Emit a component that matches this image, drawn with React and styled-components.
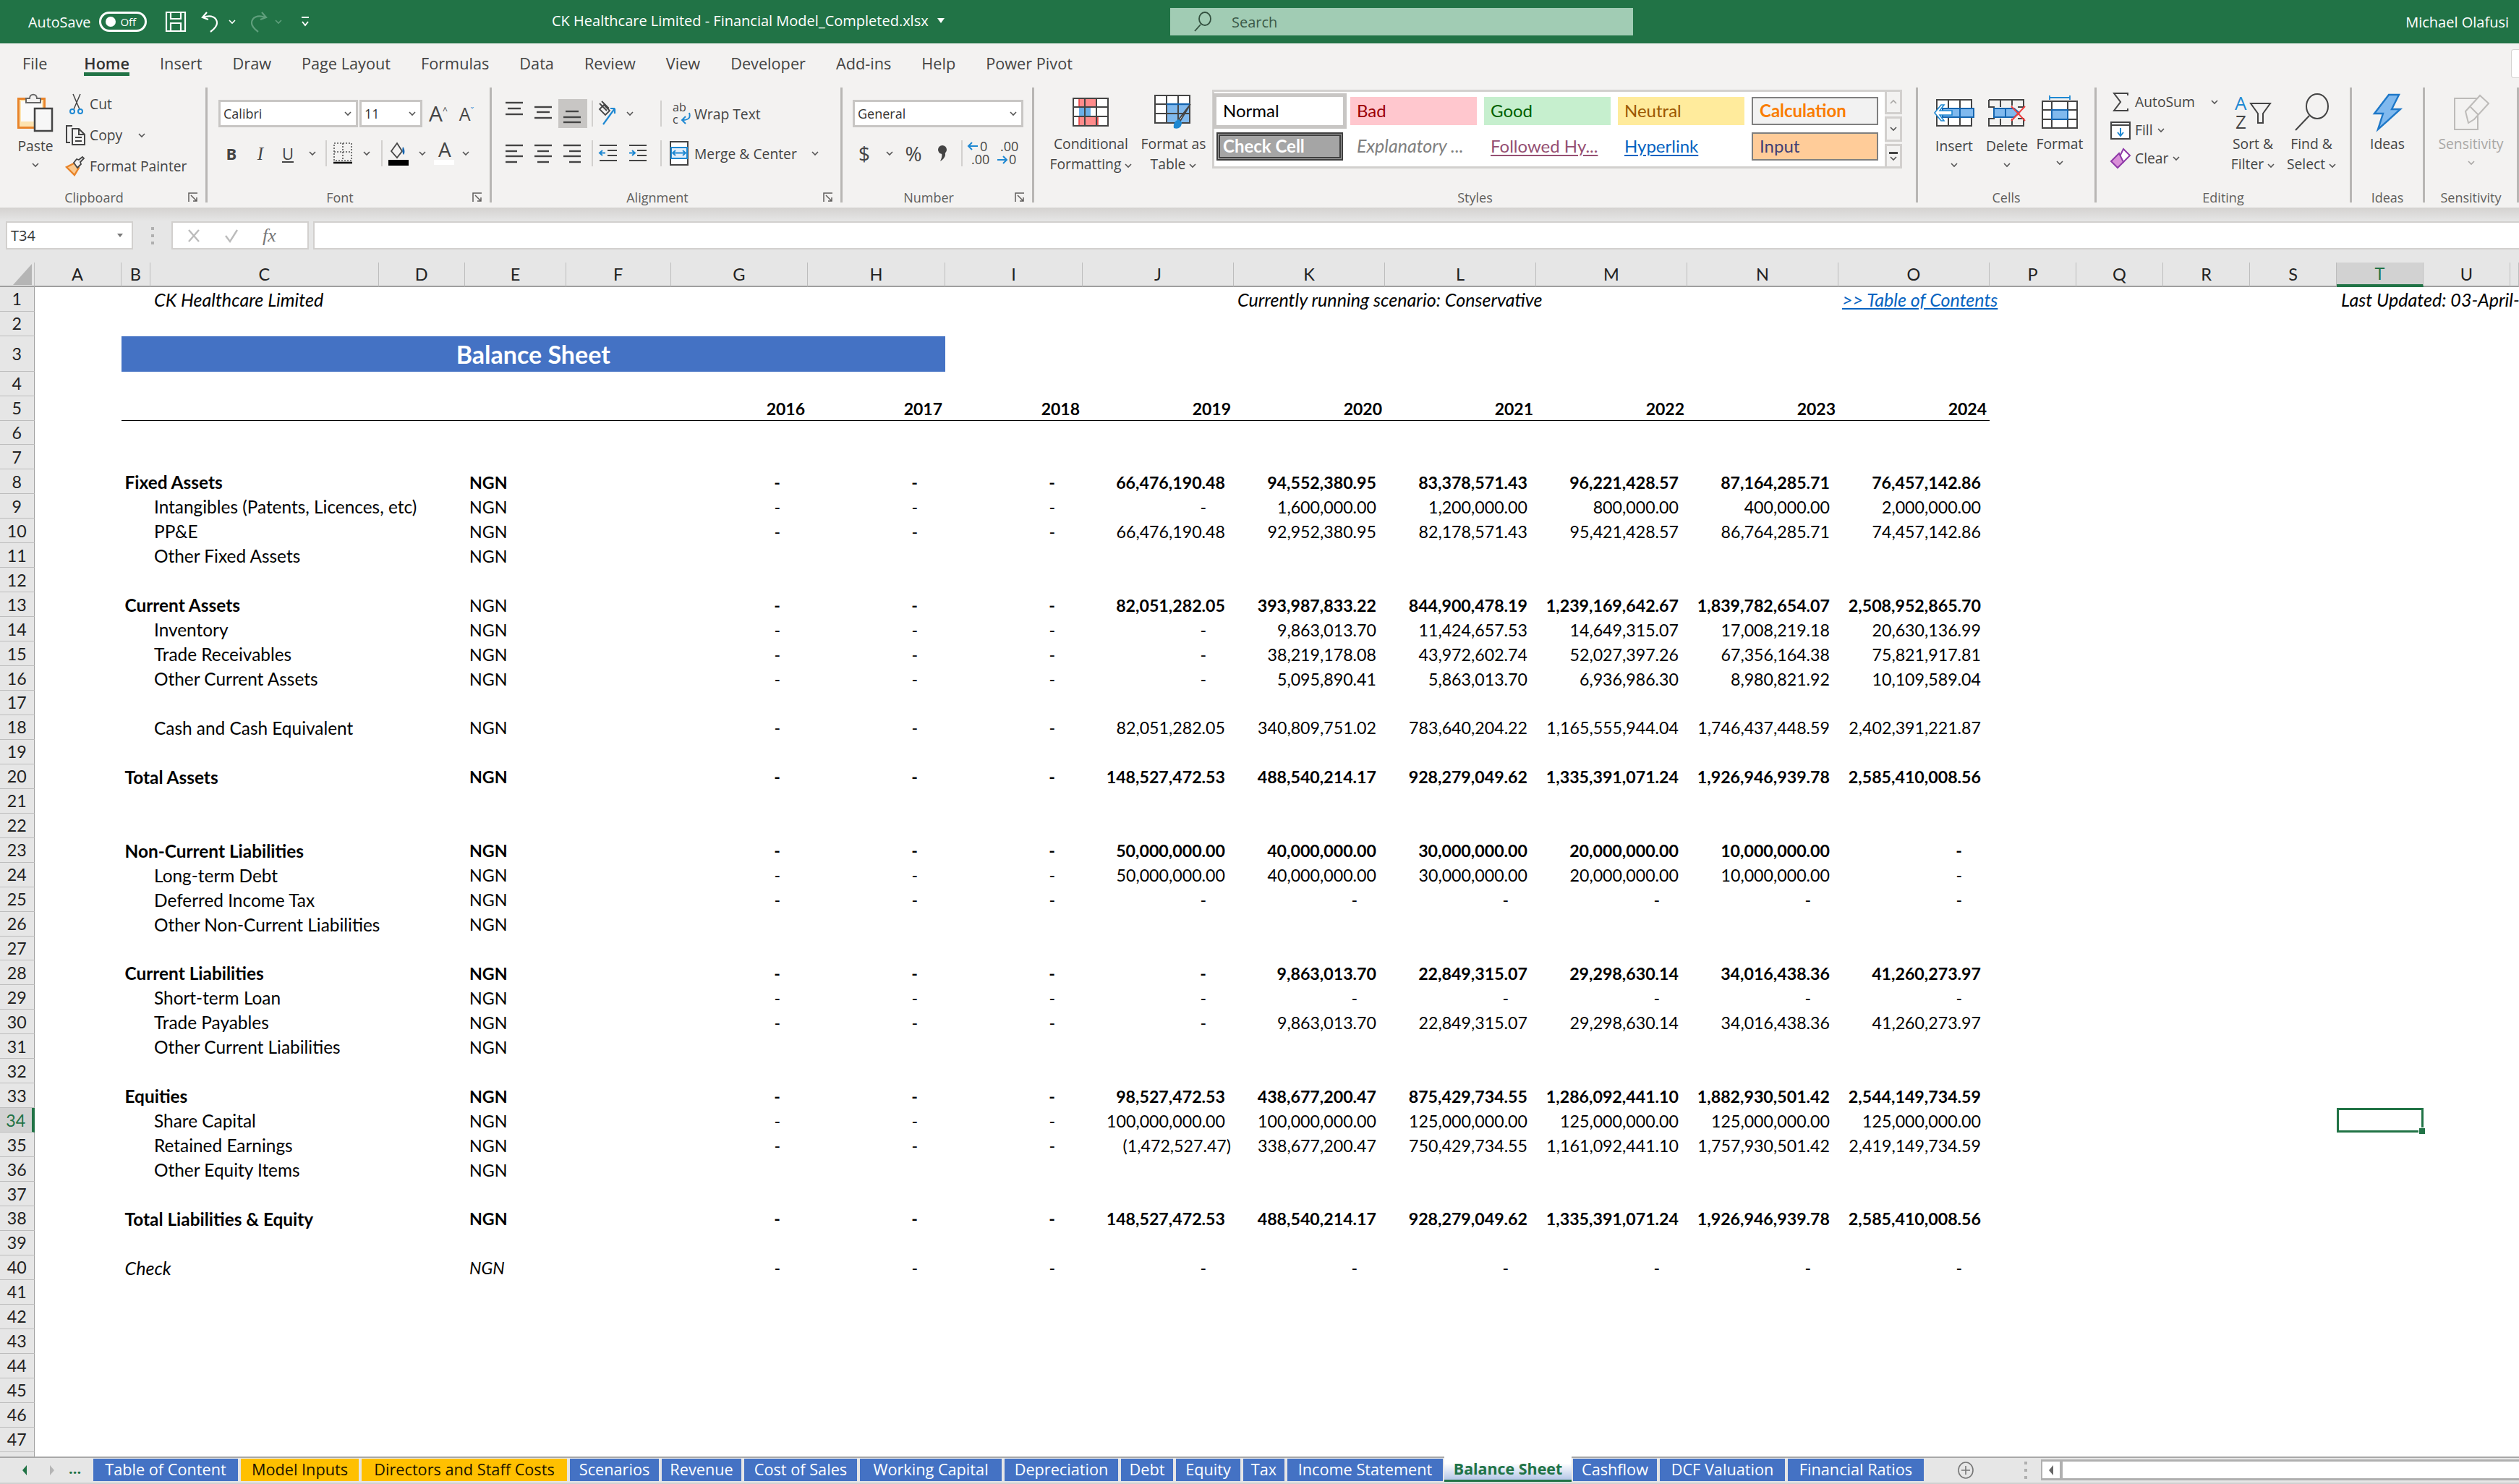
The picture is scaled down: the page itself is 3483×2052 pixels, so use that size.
import React from 'react';
import styled, { createGlobalStyle, css } from 'styled-components';

const UI = `"Open Sans", "Noto Sans", sans-serif`;
const SHEET = `Lato, "Liberation Sans", sans-serif`;
const GREEN = '#217346';
const COLS = '47.5px 120px 40.5px 315.5px 119.5px 140px 144.5px 189.5px 190px 190px 209px 209px 209px 209px 209px 209px 120px 120px 120px 120px 120px 120px 12px';

const Global = createGlobalStyle`
  html, body { margin: 0; padding: 0; background: #fff; }
  * { box-sizing: border-box; }
`;

const Page = styled.div`
  width: 3483px;
  height: 2052px;
  display: flex;
  flex-direction: column;
  overflow: hidden;
  font-family: ${UI};
  background: #fff;
`;

/* title bar */
const TitleBar = styled.header`
  height: 60px;
  flex: none;
  background: ${GREEN};
  color: #fff;
  display: flex;
  align-items: center;
  font-size: 20px;
`;
const Quick = styled.div`
  width: 763px;
  padding-left: 39px;
  display: flex;
  align-items: center;
  font-size: 19.8px;
`;
const Toggle = styled.div`
  width: 66px;
  height: 28px;
  margin: 0 26px 0 12px;
  border: 3px solid #fff;
  border-radius: 14px;
  display: flex;
  align-items: center;
  padding-left: 6px;
  gap: 6px;
  font-size: 15px;
  &::before { content: ''; width: 14px; height: 14px; border-radius: 50%; background: #fff; }
`;
const QuickBtn = styled.span`
  display: flex;
  justify-content: center;
  align-items: center;
  width: ${p => p.$w}px;
  margin-left: ${p => p.$m || 0}px;
`;
const DocTitle = styled.div`
  width: 855px;
  display: flex;
  align-items: center;
  gap: 12px;
  margin-top: -4px;
`;
const Caret = styled.span`
  width: 0;
  height: 0;
  border-left: 5px solid transparent;
  border-right: 5px solid transparent;
  border-top: 7px solid #fff;
`;
const SearchBox = styled.div`
  width: 640px;
  height: 38px;
  background: #a1ccb4;
  color: #3b5a48;
  display: flex;
  align-items: center;
  padding-left: 33px;
  gap: 28px;
`;
const UserName = styled.div`
  flex: 1;
  text-align: right;
  padding-right: 14px;
`;

/* tabs */
const TabStrip = styled.nav`
  height: 61px;
  flex: none;
  background: #f3f2f1;
  display: flex;
  align-items: center;
  padding: 0 0 6px 31px;
  gap: 42px;
  font-size: 21.7px;
  color: #444;
`;
const MenuTab = styled.span`
  position: relative;
  margin-right: ${p => p.$gap || 0}px;
  ${p => p.$on && css`
    font-weight: 600;
    color: #333;
    &::after {
      content: '';
      position: absolute;
      left: 0;
      right: 0;
      bottom: -3px;
      height: 5px;
      background: ${GREEN};
    }
  `}
`;
const ShareStub = styled.span`
  margin-left: auto;
  width: 11px;
  height: 40px;
  background: #fff;
  border: 1px solid #d5d3d1;
  border-right: 0;
  border-radius: 4px 0 0 4px;
`;

/* ribbon */
const Ribbon = styled.section`
  height: 166px;
  flex: none;
  background: #f3f2f1;
  display: flex;
  align-items: flex-start;
  color: #444;
  font-size: 19.3px;
`;
const Group = styled.div`
  width: ${p => p.$w}px;
  height: 159px;
  flex: none;
  border-right: 3px solid #b8b6b4;
  display: flex;
  flex-direction: column;
`;
const GroupBody = styled.div`
  height: 144px;
  display: flex;
  padding-left: ${p => p.$left || 0}px;
`;
const GroupFoot = styled.div`
  height: 15px;
  display: flex;
  align-items: center;
  font-size: 18px;
  color: #605e5c;
`;
const FootLabel = styled.span`
  flex: 1;
  text-align: center;
`;
const Launcher = styled.span`
  width: 24px;
  display: flex;
`;
const BigBtn = styled.div`
  width: ${p => p.$w}px;
  padding-top: 3px;
  display: flex;
  flex-direction: column;
  align-items: center;
  line-height: 28px;
  white-space: nowrap;
  color: ${p => p.$off ? '#a9a7a5' : 'inherit'};
`;
const IconSlot = styled.div`
  height: ${p => p.$h || 61}px;
  display: flex;
  align-items: center;
  justify-content: center;
`;
const ChevLine = styled.div`
  height: 24px;
  display: flex;
  align-items: center;
`;
const InlineChev = styled.span`
  display: inline-flex;
  margin-left: 5px;
  vertical-align: middle;
`;
const Stack = styled.div`
  width: ${p => p.$w}px;
  flex: none;
  display: flex;
  flex-direction: column;
  margin-left: ${p => p.$m || 0}px;
  padding-top: ${p => p.$top || 0}px;
`;
const SmallCmd = styled.div`
  height: ${p => p.$h}px;
  display: flex;
  align-items: center;
  white-space: nowrap;
`;
const CmdIcon = styled.span`
  width: ${p => p.$w}px;
  flex: none;
  display: flex;
  padding-left: ${p => p.$pl || 0}px;
`;
const CmdChev = styled.span`
  display: flex;
  margin-left: ${p => p.$m}px;
`;
const Rows = styled.div`
  display: flex;
  flex-direction: column;
  padding-top: 17px;
  gap: 17px;
`;
const Row = styled.div`
  height: 38px;
  display: flex;
  align-items: center;
`;
const Slot = styled.span`
  width: ${p => p.$w}px;
  flex: none;
  height: 40px;
  display: flex;
  align-items: center;
  justify-content: center;
  background: ${p => p.$on ? '#c8c6c4' : 'transparent'};
`;
const Sep = styled.span`
  width: 2px;
  height: 36px;
  flex: none;
  background: #d2d0ce;
  margin-left: ${p => p.$m || 0}px;
`;
const Combo = styled.div`
  width: ${p => p.$w}px;
  height: 38px;
  flex: none;
  margin-right: ${p => p.$gap || 0}px;
  background: #fff;
  border: 3px solid #c8c6c4;
  display: flex;
  align-items: center;
  justify-content: space-between;
  padding: 0 6px 0 4px;
  color: #333;
  font-size: 18px;
`;
const Glyph = styled.span`
  font-family: ${p => p.$serif ? '"Liberation Serif", serif' : UI};
  font-weight: ${p => p.$bold ? 700 : 400};
  font-style: ${p => p.$italic ? 'italic' : 'normal'};
  text-decoration: ${p => p.$under ? 'underline' : 'none'};
  font-size: ${p => p.$size || 22}px;
  margin-top: ${p => p.$top || 0}px;
  color: #444;
  line-height: 1;
`;
const GlyphMark = styled.sup`
  font-size: 12px;
  color: ${p => p.$c || '#444'};
`;

/* styles gallery */
const Gallery = styled.div`
  width: 930px;
  height: 109px;
  margin-top: 3px;
  flex: none;
  background: #fff;
  border: solid #d2d0ce;
  border-width: 3px 0 3px 3px;
  padding: 7px 0 0 3px;
  display: grid;
  grid-template-columns: repeat(5, 175px);
  grid-auto-rows: 39px;
  gap: 10px;
`;
const styleKinds = {
  normal: css`color: #000; box-shadow: 0 0 0 5px #c8c6c4;`,
  bad: css`background: #ffc7ce; color: #9c0006;`,
  good: css`background: #c6efce; color: #006100;`,
  neutral: css`background: #ffeb9c; color: #9c5700;`,
  calc: css`background: #f2f2f2; color: #fa7d00; font-weight: 700; border: 2px solid #7f7f7f;`,
  check: css`background: #a5a5a5; color: #fff; font-weight: 700; border: 5px double #3f3f3f; padding-left: 4px;`,
  explan: css`color: #7f7f7f; font-style: italic; font-size: 25px;`,
  followed: css`color: #954f72; & > span { text-decoration: underline 2px; text-underline-offset: 3px; }`,
  link: css`color: #0563c1; & > span { text-decoration: underline 2px; text-underline-offset: 3px; }`,
  input: css`background: #ffcc99; color: #3f3f76; border: 2px solid #7f7f7f;`,
};
const StyleCell = styled.div`
  font-family: ${SHEET};
  font-size: 24px;
  display: flex;
  align-items: center;
  padding: 0 0 3px 9px;
  ${p => styleKinds[p.$kind]}
`;
const ScrollCol = styled.div`
  width: 24px;
  height: 109px;
  margin: 3px 19px 0 0;
  flex: none;
  display: flex;
  flex-direction: column;
  gap: 3px;
`;
const ScrollBtn = styled.div`
  flex: 1;
  border: 3px solid #d2d0ce;
  background: #f3f2f1;
  display: flex;
  flex-direction: column;
  gap: 3px;
  align-items: center;
  justify-content: center;
`;
const MoreBar = styled.span`
  width: 12px;
  height: 3px;
  background: #444;
`;

/* formula bar */
const FormulaArea = styled.div`
  height: 76px;
  flex: none;
  background: linear-gradient(#d4d2d0, #e6e6e6 19px);
  padding: 19px 0 18px 8px;
  display: flex;
`;
const NameBox = styled.div`
  width: 176px;
  background: #fff;
  border: 2px solid #d2d0ce;
  display: flex;
  align-items: center;
  justify-content: space-between;
  padding: 0 12px 0 5px;
  font-size: 20px;
  color: #333;
`;
const GripArea = styled.div`
  width: 53px;
  display: flex;
  align-items: center;
  justify-content: center;
`;
const Grip = styled.span`
  width: 4px;
  height: 24px;
  background: repeating-linear-gradient(#b0b0b0 0 4px, transparent 4px 10px);
`;
const FxBox = styled.div`
  width: 190px;
  margin-right: 6px;
  background: #fff;
  border: 2px solid #d2d0ce;
  display: flex;
  align-items: center;
  padding-left: 20px;
  gap: 33px;
`;
const FxMark = styled.span`
  font-family: "Liberation Serif", serif;
  font-style: italic;
  font-size: 26px;
  color: #777;
`;
const FormulaInput = styled.div`
  flex: 1;
  background: #fff;
  border: solid #d2d0ce;
  border-width: 2px 0 2px 2px;
`;

/* sheet */
const SheetArea = styled.div`
  flex: 1;
  min-height: 0;
  overflow: hidden;
  font-family: ${SHEET};
  font-size: 23.2px;
  color: #000;
`;
const HeaderRow = styled.div`
  height: 34px;
  display: grid;
  grid-template-columns: ${COLS};
  background: #e6e6e6;
  font-family: ${SHEET};
  font-size: 23.5px;
  color: #222;
`;
const Corner = styled.div`
  border-bottom: 2px solid #9f9f9f;
  border-right: 1px solid #bdbdbd;
  display: flex;
  align-items: flex-end;
  justify-content: flex-end;
  padding: 0 3px 1px 0;
  &::after {
    content: '';
    width: 0;
    height: 0;
    border-left: 26px solid transparent;
    border-bottom: 29px solid #b5b5b5;
  }
`;
const ColHead = styled.div`
  display: flex;
  align-items: center;
  justify-content: center;
  border-right: 1px solid #bdbdbd;
  border-bottom: 2px solid #9f9f9f;
  ${p => p.$on && css`
    background: #d2d2d2;
    color: ${GREEN};
    border-bottom: 4px solid ${GREEN};
  `}
`;
const SheetRow = styled.div`
  height: ${p => p.$h}px;
  display: grid;
  grid-template-columns: ${COLS};
  grid-template-rows: 1fr;
`;
const RowHead = styled.div`
  grid-column: 1;
  grid-row: 1;
  background: #e6e6e6;
  border-right: 1px solid #9f9f9f;
  border-bottom: 1px solid #bdbdbd;
  color: #222;
  display: flex;
  align-items: center;
  justify-content: center;
  ${p => p.$on && css`
    background: #d2d2d2;
    color: ${GREEN};
    border-right: 4px solid ${GREEN};
  `}
`;
const Rule = styled.div`
  grid-column: 3 / 17;
  grid-row: 1;
  border-bottom: 1px solid #000;
`;
const Banner = styled.div`
  grid-column: 3 / 10;
  grid-row: 1;
  background: #4472c4;
  color: #fff;
  font-weight: 700;
  font-size: 34px;
  display: flex;
  align-items: center;
  justify-content: center;
`;
const Cell = styled.div`
  grid-column: ${p => p.$col};
  grid-row: 1;
  white-space: nowrap;
  display: flex;
  align-items: center;
  justify-content: ${p => p.$right ? 'flex-end' : 'flex-start'};
  padding: ${p => p.$right ? `1px ${p.$pad}px 0 0` : `1px 0 0 ${p.$pad}px`};
  font-size: ${p => p.$size || 23.2}px;
  font-weight: ${p => p.$bold ? 700 : 400};
  font-style: ${p => p.$italic ? 'italic' : 'normal'};
  ${p => p.$link && css`
    color: #0563c1;
    & > span { text-decoration: underline; }
  `}
`;
const Selected = styled.div`
  grid-column: 21;
  grid-row: 1;
  position: relative;
  border: 3px solid ${GREEN};
  &::after {
    content: '';
    position: absolute;
    right: -6px;
    bottom: -6px;
    width: 8px;
    height: 8px;
    background: ${GREEN};
    border: 1px solid #fff;
  }
`;

/* sheet tabs */
const BottomBar = styled.footer`
  height: 38px;
  flex: none;
  background: #e6e6e6;
  border-top: 2px solid #a8a8a8;
  border-bottom: 2px solid #d0d0d0;
  display: flex;
  font-family: ${UI};
`;
const NavArea = styled.div`
  width: 129px;
  display: flex;
  align-items: center;
  padding-left: 31px;
  gap: 32px;
`;
const TriLeft = styled.span`
  width: 0;
  height: 0;
  border-top: 7px solid transparent;
  border-bottom: 7px solid transparent;
  border-right: 6px solid ${p => p.$c};
`;
const TriRight = styled(TriLeft)`
  border-right: 0;
  border-left: 6px solid ${p => p.$c};
`;
const NavDots = styled.span`
  color: ${GREEN};
  font-weight: 700;
  font-size: 20px;
  margin-left: -12px;
  margin-top: -6px;
`;
const TabRow = styled.div`
  display: flex;
  gap: 4px;
  padding-top: 1px;
`;
const SheetTab = styled.div`
  width: ${p => p.$w}px;
  height: 31px;
  display: flex;
  align-items: center;
  justify-content: center;
  padding-bottom: 3px;
  font-size: 21.7px;
  white-space: nowrap;
  background: ${p => p.$amber ? '#ffc000' : '#4472c4'};
  color: ${p => p.$amber ? '#1c1400' : '#fff'};
  ${p => p.$active && css`
    margin: -3px -2px 0;
    height: 35px;
    padding-bottom: 0;
    background: linear-gradient(#fff 30%, #b4c6e7);
    color: ${GREEN};
    font-weight: 700;
    font-size: 21.4px;
    border-bottom: 3px solid ${GREEN};
  `}
`;
const AddArea = styled.div`
  width: 30px;
  margin-left: 43px;
  display: flex;
  align-items: center;
  justify-content: center;
`;
const BarGrip = styled.div`
  margin-left: 66px;
  display: flex;
  align-items: center;
`;
const ScrollTrack = styled.div`
  flex: 1;
  margin: 2px 0 3px 19px;
  display: flex;
  background: #fff;
  border: solid #b0b0b0;
  border-width: 3px 0 3px 2px;
`;
const ScrollLeft = styled.div`
  width: 28px;
  border-right: 4px solid #b0b0b0;
  display: flex;
  align-items: center;
  justify-content: center;
`;

/* drawn icons */
const Svg = styled.svg`
  display: block;
  flex: none;
  overflow: visible;
`;
const FlipSvg = styled(Svg)`
  transform: scaleX(-1);
`;
const Chev = ({ c = '#555' }) => (
  <Svg width="10" height="6" viewBox="0 0 10 6"><path d="M1 1l4 4 4-4" fill="none" stroke={c} strokeWidth="1.6" /></Svg>
);
const LauncherIcon = () => (
  <Svg width="14" height="14" viewBox="0 0 14 14" fill="none" stroke="#605e5c" strokeWidth="1.5">
    <path d="M1 13V1h12" /><path d="M4 4l8 8M12 7v5H7" />
  </Svg>
);
const PasteIcon = () => (
  <Svg width="50" height="54" viewBox="0 0 50 54">
    <rect x="1.5" y="7.5" width="36" height="40" fill="#fde3b0" stroke="#e8842a" strokeWidth="3" />
    <rect x="5" y="11" width="29" height="28" fill="#fafafa" />
    <path d="M12 13V7h5c0-7 10-7 10 0h5v6z" fill="#f3f2f1" stroke="#666" strokeWidth="2" />
    <rect x="24" y="21" width="24" height="31" fill="#f7f7f7" stroke="#444" strokeWidth="2.5" />
  </Svg>
);
const CutIcon = () => (
  <Svg width="20" height="28" viewBox="0 0 20 28" fill="none">
    <path d="M5 0l9 21M15 0L6 21" stroke="#444" strokeWidth="1.5" />
    <circle cx="4" cy="24" r="3" stroke="#1e88d2" strokeWidth="2" />
    <circle cx="15" cy="24" r="3" stroke="#1e88d2" strokeWidth="2" />
  </Svg>
);
const CopyIcon = () => (
  <Svg width="28" height="28" viewBox="0 0 28 28" fill="none" stroke="#444" strokeWidth="2">
    <path d="M9 1H1v23h5" /><path d="M9 5h9l8 8v14H9zM18 5v8h8M13 17h9M13 22h9" />
  </Svg>
);
const PainterIcon = () => (
  <Svg width="28" height="27" viewBox="0 0 28 27">
    <path d="M1 15l12-6 5 7-6 10z" fill="#fbc98e" stroke="#e8842a" strokeWidth="2.4" />
    <path d="M11 9l5 7 5-5-1-3 5-5-2-2-5 4-3-1z" fill="#f3f2f1" stroke="#444" strokeWidth="1.8" />
  </Svg>
);
const AlignIcon = ({ lines }) => (
  <Svg width="26" height="36" viewBox="0 0 26 36">
    {lines.map(([x1, x2, y]) => <line key={y} x1={x1} x2={x2} y1={y} y2={y} stroke="#444" strokeWidth="2.4" />)}
  </Svg>
);
const OrientIcon = () => (
  <Svg width="30" height="36" viewBox="0 0 30 36" fill="none">
    <path d="M3 4l10 10M6 1l10 10M3 12l6-6 8 8-6 6z" stroke="#444" strokeWidth="1.8" />
    <path d="M8 33L24 11M24 11h-6M24 11v7" stroke="#1e88d2" strokeWidth="2.2" />
  </Svg>
);
const IndentIcon = ({ out }) => (
  <Svg width="26" height="24" viewBox="0 0 26 24" fill="none">
    <path d="M1 1h24M12 8h13M12 15h13M1 22h24" stroke="#444" strokeWidth="2.2" />
    <path d={out ? 'M9 11.5H1M5 8l-4 3.5L5 15' : 'M1 11.5h8M5 8l4 3.5L5 15'} stroke="#1e88d2" strokeWidth="2" />
  </Svg>
);
const BorderIcon = () => (
  <Svg width="26" height="30" viewBox="0 0 26 30" fill="none">
    <path d="M1 1h24v24H1zM1 13h24M13 1v24" stroke="#555" strokeWidth="1.6" strokeDasharray="2 2" />
    <path d="M0 28h26" stroke="#111" strokeWidth="2.6" />
  </Svg>
);
const FillIcon = () => (
  <Svg width="28" height="34" viewBox="0 0 28 34">
    <path d="M4 14l8-11 7 11-7 9z" fill="none" stroke="#444" strokeWidth="1.8" />
    <path d="M20 8c3 3 3 9 1 11-2-2-2-8-1-11z" fill="#1565b0" />
    <rect x="0" y="26" width="28" height="8" fill="#000" />
  </Svg>
);
const FontColorIcon = () => (
  <Svg width="28" height="34" viewBox="0 0 28 34">
    <text x="6" y="22" fontSize="28" fill="#444" fontFamily="Open Sans">A</text>
    <rect x="0" y="26" width="28" height="7" fill="#fff" />
  </Svg>
);
const WrapIcon = () => (
  <Svg width="26" height="34" viewBox="0 0 26 34">
    <text x="0" y="14" fontSize="16" fill="#444" fontFamily="Open Sans">ab</text>
    <text x="0" y="31" fontSize="16" fill="#444" fontFamily="Open Sans">c</text>
    <path d="M23 16c2 6 0 10-9 10M18 21l-5 5 5 5" fill="none" stroke="#1e88d2" strokeWidth="2" />
  </Svg>
);
const MergeIcon = () => (
  <Svg width="26" height="34" viewBox="0 0 26 34">
    <rect x="1" y="1" width="24" height="32" fill="#fff" stroke="#444" strokeWidth="2" />
    <rect x="2" y="9" width="22" height="15" fill="#e3eefa" stroke="#1e88d2" strokeWidth="2" />
    <path d="M4 16.5h18M8 13l-4 3.5L8 20M18 13l4 3.5-4 3.5" fill="none" stroke="#1e88d2" strokeWidth="1.8" />
  </Svg>
);
const CommaIcon = () => (
  <Svg width="14" height="22" viewBox="0 0 14 22">
    <circle cx="7" cy="6" r="6" fill="#444" />
    <path d="M9 8c4 4 2 10-5 14 2-4 3-8 2-11z" fill="#444" />
  </Svg>
);
const GridLines = ({ y = 0, x = 0 }) => (
  <path d={`M${x + 1} ${y + 1}h48v38h-48zM${x + 17} ${y + 1}v38M${x + 33} ${y + 1}v38M${x + 1} ${y + 13}h48M${x + 1} ${y + 26}h48`} fill="none" stroke="#444" strokeWidth="2" />
);
const CondIcon = () => (
  <Svg width="50" height="40" viewBox="0 0 50 40">
    <rect x="1" y="1" width="48" height="38" fill="#fff" />
    <rect x="9" y="1" width="24" height="12" fill="#ff8b8b" stroke="#e83a3a" strokeWidth="1.5" />
    <rect x="9" y="13" width="16" height="13" fill="#6aaee6" />
    <rect x="9" y="26" width="26" height="13" fill="#ff8b8b" stroke="#e83a3a" strokeWidth="1.5" />
    <GridLines />
  </Svg>
);
const TableIcon = () => (
  <Svg width="52" height="48" viewBox="0 0 52 48">
    <rect x="1" y="1" width="48" height="38" fill="#fff" />
    <rect x="17" y="13" width="32" height="26" fill="#80b9ee" />
    <GridLines />
    <path d="M17 13h32" stroke="#1565b0" strokeWidth="2.4" />
    <path d="M50 13L36 36l-2-2z" fill="#fff" stroke="#444" strokeWidth="1.8" />
    <path d="M34 34c-6 2-8 7-7 12 5 2 11 0 11-8z" fill="#1e88d2" />
  </Svg>
);
const InsertIcon = () => (
  <Svg width="56" height="38" viewBox="0 0 56 38">
    <path d="M4 1h48v36H4zM20 1v36M36 1v36" fill="#fff" stroke="#444" strokeWidth="2" />
    <rect x="12" y="13" width="43" height="12" fill="#80b9ee" stroke="#1565b0" strokeWidth="2" />
    <path d="M36 13v12" stroke="#1565b0" strokeWidth="2" />
    <path d="M25 16H8l6-8h-4L1 19l9 11h4l-6-8h17z" fill="#fff" stroke="#1e88d2" strokeWidth="1.6" />
  </Svg>
);
const DeleteIcon = () => (
  <Svg width="52" height="38" viewBox="0 0 52 38">
    <path d="M1 1h48v10h-8M9 11H1V1M9 27H1v10h48v-10h-8M17 1v10M33 1v8M17 27v10M33 27v10" fill="none" stroke="#444" strokeWidth="2" />
    <path d="M8 13h28l7 6-7 6H8z" fill="#80b9ee" stroke="#1565b0" strokeWidth="2" />
    <path d="M24 13v12" stroke="#1565b0" strokeWidth="2" />
    <path d="M32 10l19 20M51 10L32 30" stroke="#f04040" strokeWidth="2" />
  </Svg>
);
const FormatIcon = () => (
  <Svg width="50" height="46" viewBox="0 0 50 46">
    <path d="M11 3h28M11 0v6M39 0v6" stroke="#1e88d2" strokeWidth="1.8" />
    <path d="M1 8h48v37H1zM14 8v37M36 8v37M1 20h48M1 33h48" fill="#fff" stroke="#444" strokeWidth="2" />
    <rect x="14" y="20" width="22" height="13" fill="#80b9ee" stroke="#1565b0" strokeWidth="2" />
  </Svg>
);
const SigmaIcon = () => (
  <Svg width="22" height="26" viewBox="0 0 22 26"><path d="M21 4V1H2l9 12L2 25h19v-3" fill="none" stroke="#444" strokeWidth="2" /></Svg>
);
const FillDownIcon = () => (
  <Svg width="28" height="24" viewBox="0 0 28 24">
    <rect x="1" y="1" width="26" height="23" fill="#fff" stroke="#444" strokeWidth="2" />
    <path d="M1 5h26" stroke="#444" strokeWidth="2" />
    <path d="M14 9v11M10 15l4 5 4-5" fill="none" stroke="#1e88d2" strokeWidth="2" />
  </Svg>
);
const ClearIcon = () => (
  <Svg width="28" height="28" viewBox="0 0 28 28">
    <path d="M18 1l9 9-9 9-6-6z" fill="#fff" stroke="#8e3aa8" strokeWidth="2" />
    <path d="M12 7L1 18l9 9 8-8z" fill="#d98fd8" stroke="#8e3aa8" strokeWidth="2" />
  </Svg>
);
const SortIcon = () => (
  <Svg width="50" height="48" viewBox="0 0 50 48">
    <text x="0" y="21" fontSize="26" fontFamily="Open Sans" fill="#1e88d2">A</text>
    <text x="1" y="47" fontSize="26" fontFamily="Open Sans" fill="#444">Z</text>
    <path d="M22 12h27L39 26v13h-7V26z" fill="none" stroke="#444" strokeWidth="2" />
  </Svg>
);
const FindIcon = () => (
  <Svg width="50" height="52" viewBox="0 0 50 52" fill="none" stroke="#444" strokeWidth="2">
    <ellipse cx="33" cy="18" rx="15" ry="17" />
    <path d="M22 31L3 51" />
  </Svg>
);
const BoltIcon = () => (
  <Svg width="38" height="50" viewBox="0 0 38 50">
    <path d="M21 1h14L25 21h12L6 49l7-22H1z" fill="#80b9ee" stroke="#1e78c8" strokeWidth="2.4" />
  </Svg>
);
const SensitivityIcon = () => (
  <Svg width="50" height="50" viewBox="0 0 50 50" fill="none" stroke="#bdbbb9" strokeWidth="2">
    <path d="M34 6H2v43h32V30" />
    <path d="M17 24l20-22 12 11-20 22-8 5zM24 18l11 11" />
  </Svg>
);
const SearchIcon = ({ c = '#33503f' }) => (
  <Svg width="24" height="28" viewBox="0 0 24 28" fill="none" stroke={c} strokeWidth="1.8">
    <ellipse cx="15" cy="10" rx="8" ry="9" /><path d="M9 18L1 27" />
  </Svg>
);
const SaveIcon = () => (
  <Svg width="28" height="28" viewBox="0 0 28 28" fill="none" stroke="#fff" strokeWidth="2.2">
    <path d="M1 1h26v26H1z" /><path d="M7 1v9h14V1M7 27V16h14v11" />
  </Svg>
);
const UNDO_PATH = 'M8 1L2 8l8 3M3 8c11-4 19 0 19 8 0 5-5 9-9 12';
const UndoIcon = () => (
  <Svg width="26" height="28" viewBox="0 0 26 28" fill="none" stroke="#fff" strokeWidth="2.2"><path d={UNDO_PATH} /></Svg>
);
const RedoIcon = () => (
  <FlipSvg width="26" height="28" viewBox="0 0 26 28" fill="none" stroke="#5f9f7c" strokeWidth="2.2"><path d={UNDO_PATH} /></FlipSvg>
);
const CustomIcon = () => (
  <Svg width="12" height="16" viewBox="0 0 12 16" fill="none" stroke="#fff" strokeWidth="2">
    <path d="M1 2h10M2 8l4 5 4-5" />
  </Svg>
);
const PlusIcon = () => (
  <Svg width="22" height="24" viewBox="0 0 22 24" fill="none" stroke="#777" strokeWidth="1.6">
    <ellipse cx="11" cy="12" rx="10" ry="11" /><path d="M11 6v12M5 12h12" />
  </Svg>
);
const NameCaret = () => (
  <Svg width="8" height="5" viewBox="0 0 8 5"><path d="M0 0h8L4 5z" fill="#777" /></Svg>
);
const DecimalIcon = ({ up }) => (
  <Svg width="30" height="36" viewBox="0 0 30 36">
    {up ? (
      <>
        <path d="M14 8H1M6 3L1 8l5 5" fill="none" stroke="#1e88d2" strokeWidth="2" />
        <text x="17" y="15" fontSize="18" fill="#444" fontFamily="Open Sans">0</text>
        <text x="5" y="33" fontSize="18" fill="#444" fontFamily="Open Sans">.00</text>
      </>
    ) : (
      <>
        <text x="5" y="15" fontSize="18" fill="#444" fontFamily="Open Sans">.00</text>
        <path d="M1 27h13M9 22l5 5-5 5" fill="none" stroke="#1e88d2" strokeWidth="2" />
        <text x="17" y="33" fontSize="18" fill="#444" fontFamily="Open Sans">0</text>
      </>
    )}
  </Svg>
);

/* sheet data */
const letters = 'ABCDEFGHIJKLMNOPQRSTUV'.split('');
const dashes = n => Array(n).fill('-');
const totalAssets = ['-', '-', '-', '148,527,472.53', '488,540,214.17', '928,279,049.62', '1,335,391,071.24', '1,926,946,939.78', '2,585,410,008.56'];
const sheetRows = {
  8: { head: 'Fixed Assets', bold: true, vals: [...dashes(3), '66,476,190.48', '94,552,380.95', '83,378,571.43', '96,221,428.57', '87,164,285.71', '76,457,142.86'] },
  9: { label: 'Intangibles (Patents, Licences, etc)', vals: [...dashes(4), '1,600,000.00', '1,200,000.00', '800,000.00', '400,000.00', '2,000,000.00'] },
  10: { label: 'PP&E', vals: [...dashes(3), '66,476,190.48', '92,952,380.95', '82,178,571.43', '95,421,428.57', '86,764,285.71', '74,457,142.86'] },
  11: { label: 'Other Fixed Assets', vals: [] },
  13: { head: 'Current Assets', bold: true, plainUnit: true, vals: [...dashes(3), '82,051,282.05', '393,987,833.22', '844,900,478.19', '1,239,169,642.67', '1,839,782,654.07', '2,508,952,865.70'] },
  14: { label: 'Inventory', vals: [...dashes(4), '9,863,013.70', '11,424,657.53', '14,649,315.07', '17,008,219.18', '20,630,136.99'] },
  15: { label: 'Trade Receivables', vals: [...dashes(4), '38,219,178.08', '43,972,602.74', '52,027,397.26', '67,356,164.38', '75,821,917.81'] },
  16: { label: 'Other Current Assets', vals: [...dashes(4), '5,095,890.41', '5,863,013.70', '6,936,986.30', '8,980,821.92', '10,109,589.04'] },
  18: { label: 'Cash and Cash Equivalent', vals: [...dashes(3), '82,051,282.05', '340,809,751.02', '783,640,204.22', '1,165,555,944.04', '1,746,437,448.59', '2,402,391,221.87'] },
  20: { head: 'Total Assets', bold: true, vals: totalAssets },
  23: { head: 'Non-Current Liabilities', bold: true, vals: [...dashes(3), '50,000,000.00', '40,000,000.00', '30,000,000.00', '20,000,000.00', '10,000,000.00', '-'] },
  24: { label: 'Long-term Debt', vals: [...dashes(3), '50,000,000.00', '40,000,000.00', '30,000,000.00', '20,000,000.00', '10,000,000.00', '-'] },
  25: { label: 'Deferred Income Tax', vals: dashes(9) },
  26: { label: 'Other Non-Current Liabilities', vals: [] },
  28: { head: 'Current Liabilities', bold: true, vals: [...dashes(4), '9,863,013.70', '22,849,315.07', '29,298,630.14', '34,016,438.36', '41,260,273.97'] },
  29: { label: 'Short-term Loan', vals: dashes(9) },
  30: { label: 'Trade Payables', vals: [...dashes(4), '9,863,013.70', '22,849,315.07', '29,298,630.14', '34,016,438.36', '41,260,273.97'] },
  31: { label: 'Other Current Liabilities', vals: [] },
  33: { head: 'Equities', bold: true, vals: [...dashes(3), '98,527,472.53', '438,677,200.47', '875,429,734.55', '1,286,092,441.10', '1,882,930,501.42', '2,544,149,734.59'] },
  34: { label: 'Share Capital', vals: [...dashes(3), '100,000,000.00', '100,000,000.00', '125,000,000.00', '125,000,000.00', '125,000,000.00', '125,000,000.00'] },
  35: { label: 'Retained Earnings', vals: [...dashes(3), '(1,472,527.47)', '338,677,200.47', '750,429,734.55', '1,161,092,441.10', '1,757,930,501.42', '2,419,149,734.59'] },
  36: { label: 'Other Equity Items', vals: [] },
  38: { head: 'Total Liabilities & Equity', bold: true, vals: totalAssets },
  40: { head: 'Check', italic: true, vals: dashes(9) },
};
const years = ['2016', '2017', '2018', '2019', '2020', '2021', '2022', '2023', '2024'];

const LABEL_SIZE = 24.4;
const ITALIC_SIZE = 25.1;
const valuePad = v => (v === '-' ? 38 : v.startsWith('(') ? 4 : 12);

const RowCells = ({ n }) => {
  if (n === 1) {
    return (
      <>
        <Cell $col={4} $pad={5} $italic $size={ITALIC_SIZE}>CK Healthcare Limited</Cell>
        <Cell $col={12} $pad={5} $italic $size={ITALIC_SIZE}>Currently running scenario: Conservative</Cell>
        <Cell $col={16} $pad={5} $italic $size={ITALIC_SIZE} $link><span>&gt;&gt; Table of Contents</span></Cell>
        <Cell $col={21} $pad={6} $italic $size={ITALIC_SIZE}>Last Updated: 03-April-2020</Cell>
      </>
    );
  }
  if (n === 3) return <Banner>Balance Sheet</Banner>;
  if (n === 5) {
    return (
      <>
        <Rule />
        {years.map((y, i) => <Cell key={y} $col={8 + i} $right $pad={4} $bold $size={23}>{y}</Cell>)}
      </>
    );
  }
  const r = sheetRows[n];
  if (!r) return null;
  return (
    <>
      {r.head && <Cell $col={3} $pad={5} $bold={r.bold} $italic={r.italic} $size={r.italic ? ITALIC_SIZE : LABEL_SIZE}>{r.head}</Cell>}
      {r.label && <Cell $col={4} $pad={5} $size={LABEL_SIZE}>{r.label}</Cell>}
      <Cell $col={6} $pad={6} $bold={r.bold && !r.plainUnit} $italic={r.italic}>NGN</Cell>
      {r.vals.map((v, i) => (
        <Cell key={i} $col={8 + i} $right $pad={valuePad(v)} $bold={r.bold}>{v}</Cell>
      ))}
      {n === 34 && <Selected />}
    </>
  );
};

const menuTabs = ['Insert', 'Draw', 'Page Layout', 'Formulas', 'Data', 'Review', 'View', 'Developer', 'Add-ins', 'Help', 'Power Pivot'];
const sheetTabs = [
  ['Table of Content', 200], ['Model Inputs', 163, 'amber'], ['Directors and Staff Costs', 284, 'amber'], ['Scenarios', 123], ['Revenue', 110],
  ['Cost of Sales', 156], ['Working Capital', 196], ['Depreciation', 157], ['Debt', 72], ['Equity', 89], ['Tax', 57], ['Income Statement', 215],
  ['Balance Sheet', 176, 'active'], ['Cashflow', 116], ['DCF Valuation', 173], ['Financial Ratios', 188],
];
const galleryCells = [
  ['normal', 'Normal'], ['bad', 'Bad'], ['good', 'Good'], ['neutral', 'Neutral'], ['calc', 'Calculation'],
  ['check', 'Check Cell'], ['explan', 'Explanatory ...'], ['followed', 'Followed Hy...'], ['link', 'Hyperlink'], ['input', 'Input'],
];

const Foot = ({ label, launcher }) => (
  <GroupFoot>
    <FootLabel>{label}</FootLabel>
    {launcher && <Launcher><LauncherIcon /></Launcher>}
  </GroupFoot>
);

const App = () => (
  <Page>
    <Global />
    <TitleBar>
      <Quick>
        AutoSave
        <Toggle>Off</Toggle>
        <SaveIcon />
        <QuickBtn $w={46} $m={11}><UndoIcon /></QuickBtn>
        <QuickBtn $w={10} $m={2}><Chev c="#fff" /></QuickBtn>
        <QuickBtn $w={46} $m={8}><RedoIcon /></QuickBtn>
        <QuickBtn $w={10}><Chev c="#5f9f7c" /></QuickBtn>
        <QuickBtn $w={64}><CustomIcon /></QuickBtn>
      </Quick>
      <DocTitle>CK Healthcare Limited - Financial Model_Completed.xlsx<Caret /></DocTitle>
      <SearchBox><SearchIcon />Search</SearchBox>
      <UserName>Michael Olafusi</UserName>
    </TitleBar>

    <TabStrip>
      <MenuTab $gap={9}>File</MenuTab>
      <MenuTab $on>Home</MenuTab>
      {menuTabs.map(t => <MenuTab key={t}>{t}</MenuTab>)}
      <ShareStub />
    </TabStrip>

    <Ribbon>
      <Group $w={287}>
        <GroupBody $left={21}>
          <BigBtn $w={56}>
            <IconSlot $h={64}><PasteIcon /></IconSlot>
            Paste
            <ChevLine><Chev /></ChevLine>
          </BigBtn>
          <Stack $w={190} $m={14} $top={1}>
            <SmallCmd $h={43}><CmdIcon $w={33} $pl={5}><CutIcon /></CmdIcon>Cut</SmallCmd>
            <SmallCmd $h={43}><CmdIcon $w={33}><CopyIcon /></CmdIcon>Copy<CmdChev $m={22}><Chev /></CmdChev></SmallCmd>
            <SmallCmd $h={43}><CmdIcon $w={33}><PainterIcon /></CmdIcon>Format Painter</SmallCmd>
          </Stack>
        </GroupBody>
        <Foot label="Clipboard" launcher />
      </Group>

      <Group $w={393}>
        <GroupBody $left={15}>
          <Rows>
            <Row>
              <Combo $w={193} $gap={2}>Calibri<Chev /></Combo>
              <Combo $w={87}>11<Chev /></Combo>
              <Slot $w={44}><Glyph $size={30}>A<GlyphMark>^</GlyphMark></Glyph></Slot>
              <Slot $w={34}><Glyph $size={25}>A<GlyphMark $c="#1e88d2">ˇ</GlyphMark></Glyph></Slot>
            </Row>
            <Row>
              <Slot $w={36}><Glyph $bold $size={22}>B</Glyph></Slot>
              <Slot $w={44}><Glyph $italic $serif $size={25}>I</Glyph></Slot>
              <Slot $w={32}><Glyph $under $size={22}>U</Glyph></Slot>
              <Slot $w={36}><Chev /></Slot>
              <Sep />
              <Slot $w={44}><BorderIcon /></Slot>
              <Slot $w={22}><Chev /></Slot>
              <Sep $m={9} />
              <Slot $w={44}><FillIcon /></Slot>
              <Slot $w={22}><Chev /></Slot>
              <Slot $w={38}><FontColorIcon /></Slot>
              <Slot $w={22}><Chev /></Slot>
            </Row>
          </Rows>
        </GroupBody>
        <Foot label="Font" launcher />
      </Group>

      <Group $w={485}>
        <GroupBody $left={12}>
          <Rows>
            <Row>
              <Slot $w={40}><AlignIcon lines={[[0, 24, 3], [3, 21, 11], [0, 24, 19]]} /></Slot>
              <Slot $w={40}><AlignIcon lines={[[0, 24, 9], [3, 21, 16], [0, 24, 24]]} /></Slot>
              <Slot $w={40} $on><AlignIcon lines={[[3, 21, 15], [0, 24, 23], [0, 24, 30]]} /></Slot>
              <Sep $m={6} />
              <Slot $w={42}><OrientIcon /></Slot>
              <Slot $w={18}><Chev /></Slot>
              <Sep $m={33} />
              <CmdIcon $w={45} $pl={15}><WrapIcon /></CmdIcon>Wrap Text
            </Row>
            <Row>
              <Slot $w={40}><AlignIcon lines={[[0, 24, 7], [0, 16, 15], [0, 24, 22], [0, 16, 30]]} /></Slot>
              <Slot $w={40}><AlignIcon lines={[[0, 24, 7], [4, 20, 15], [0, 24, 22], [4, 20, 30]]} /></Slot>
              <Slot $w={40}><AlignIcon lines={[[0, 24, 7], [8, 24, 15], [0, 24, 22], [8, 24, 30]]} /></Slot>
              <Sep $m={6} />
              <Slot $w={42}><IndentIcon out /></Slot>
              <Slot $w={40}><IndentIcon /></Slot>
              <Sep $m={11} />
              <CmdIcon $w={45} $pl={11}><MergeIcon /></CmdIcon>Merge &amp; Center
              <CmdChev $m={20}><Chev /></CmdChev>
            </Row>
          </Rows>
        </GroupBody>
        <Foot label="Alignment" launcher />
      </Group>

      <Group $w={265}>
        <GroupBody $left={14}>
          <Rows>
            <Row>
              <Combo $w={236}>General<Chev /></Combo>
            </Row>
            <Row>
              <Slot $w={32}><Glyph $size={28}>$</Glyph></Slot>
              <Slot $w={38}><Chev /></Slot>
              <Slot $w={28}><Glyph $size={28}>%</Glyph></Slot>
              <Slot $w={52}><CommaIcon /></Slot>
              <Sep />
              <Slot $w={44}><DecimalIcon up /></Slot>
              <Slot $w={36}><DecimalIcon /></Slot>
            </Row>
          </Rows>
        </GroupBody>
        <Foot label="Number" launcher />
      </Group>

      <Group $w={1222}>
        <GroupBody $left={18}>
          <BigBtn $w={122}>
            <IconSlot><CondIcon /></IconSlot>
            Conditional
            <span>Formatting<InlineChev><Chev /></InlineChev></span>
          </BigBtn>
          <BigBtn $w={108}>
            <IconSlot><TableIcon /></IconSlot>
            Format as
            <span>Table<InlineChev><Chev /></InlineChev></span>
          </BigBtn>
          <Gallery>
            {galleryCells.map(([kind, text]) => <StyleCell key={kind} $kind={kind}><span>{text}</span></StyleCell>)}
          </Gallery>
          <ScrollCol>
            <ScrollBtn><Svg width="10" height="6" viewBox="0 0 10 6"><path d="M1 5l4-4 4 4" fill="none" stroke="#a9a7a5" strokeWidth="1.6" /></Svg></ScrollBtn>
            <ScrollBtn><Chev /></ScrollBtn>
            <ScrollBtn><MoreBar /><Chev /></ScrollBtn>
          </ScrollCol>
        </GroupBody>
        <Foot label="Styles" />
      </Group>

      <Group $w={247}>
        <GroupBody $left={14}>
          <BigBtn $w={72}>
            <IconSlot $h={64}><InsertIcon /></IconSlot>
            Insert
            <ChevLine><Chev /></ChevLine>
          </BigBtn>
          <BigBtn $w={74}>
            <IconSlot $h={64}><DeleteIcon /></IconSlot>
            Delete
            <ChevLine><Chev /></ChevLine>
          </BigBtn>
          <BigBtn $w={72}>
            <IconSlot><FormatIcon /></IconSlot>
            Format
            <ChevLine><Chev /></ChevLine>
          </BigBtn>
        </GroupBody>
        <Foot label="Cells" />
      </Group>

      <Group $w={353}>
        <GroupBody $left={19}>
          <Stack $w={160}>
            <SmallCmd $h={39}><CmdIcon $w={34} $pl={3}><SigmaIcon /></CmdIcon>AutoSum<CmdChev $m={22}><Chev /></CmdChev></SmallCmd>
            <SmallCmd $h={39}><CmdIcon $w={34}><FillDownIcon /></CmdIcon>Fill<CmdChev $m={6}><Chev /></CmdChev></SmallCmd>
            <SmallCmd $h={39}><CmdIcon $w={34}><ClearIcon /></CmdIcon>Clear<CmdChev $m={6}><Chev /></CmdChev></SmallCmd>
          </Stack>
          <BigBtn $w={74}>
            <IconSlot><SortIcon /></IconSlot>
            Sort &amp;
            <span>Filter<InlineChev><Chev /></InlineChev></span>
          </BigBtn>
          <BigBtn $w={88}>
            <IconSlot><FindIcon /></IconSlot>
            Find &amp;
            <span>Select<InlineChev><Chev /></InlineChev></span>
          </BigBtn>
        </GroupBody>
        <Foot label="Editing" />
      </Group>

      <Group $w={101}>
        <GroupBody>
          <BigBtn $w={98}>
            <IconSlot><BoltIcon /></IconSlot>
            Ideas
          </BigBtn>
        </GroupBody>
        <Foot label="Ideas" />
      </Group>

      <Group $w={130}>
        <GroupBody>
          <BigBtn $w={127} $off>
            <IconSlot><SensitivityIcon /></IconSlot>
            Sensitivity
            <ChevLine><Chev c="#a9a7a5" /></ChevLine>
          </BigBtn>
        </GroupBody>
        <Foot label="Sensitivity" />
      </Group>
    </Ribbon>

    <FormulaArea>
      <NameBox>T34<NameCaret /></NameBox>
      <GripArea><Grip /></GripArea>
      <FxBox>
        <Svg width="18" height="20" viewBox="0 0 18 20"><path d="M2 2l14 16M16 2L2 18" stroke="#bbb" strokeWidth="2.4" /></Svg>
        <Svg width="20" height="20" viewBox="0 0 20 20"><path d="M2 10l6 8L18 2" fill="none" stroke="#bbb" strokeWidth="2.4" /></Svg>
        <FxMark>fx</FxMark>
      </FxBox>
      <FormulaInput />
    </FormulaArea>

    <HeaderRow>
      <Corner />
      {letters.map(l => <ColHead key={l} $on={l === 'T'}>{l === 'V' ? '' : l}</ColHead>)}
    </HeaderRow>

    <SheetArea>
      {Array.from({ length: 48 }, (_, i) => i + 1).map(n => (
        <SheetRow key={n} $h={n === 3 ? 48.7 : 33.96}>
          <RowHead $on={n === 34}>{n < 48 ? n : ''}</RowHead>
          <RowCells n={n} />
        </SheetRow>
      ))}
    </SheetArea>

    <BottomBar>
      <NavArea>
        <TriLeft $c={GREEN} />
        <TriRight $c="#b5b5b5" />
        <NavDots>...</NavDots>
      </NavArea>
      <TabRow>
        {sheetTabs.map(([name, w, tone]) => (
          <SheetTab key={name} $w={w} $amber={tone === 'amber'} $active={tone === 'active'}>{name}</SheetTab>
        ))}
      </TabRow>
      <AddArea><PlusIcon /></AddArea>
      <BarGrip><Grip /></BarGrip>
      <ScrollTrack>
        <ScrollLeft><TriLeft $c="#666" /></ScrollLeft>
      </ScrollTrack>
    </BottomBar>
  </Page>
);

export default App;
